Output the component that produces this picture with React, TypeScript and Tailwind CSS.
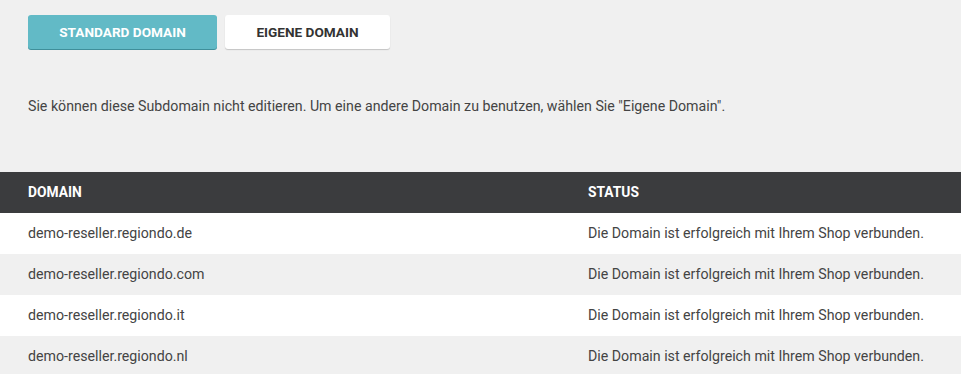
const DOMAINS = [
  'demo-reseller.regiondo.de',
  'demo-reseller.regiondo.com',
  'demo-reseller.regiondo.it',
  'demo-reseller.regiondo.nl',
]

export default function App() {
  return (
    <div className="min-h-screen bg-[#f0f0f0] font-['Roboto',sans-serif] text-[#444]">
      <div className="flex gap-2 px-7 pt-[15px]">
        <button className="h-[34px] w-[189px] rounded-[3px] bg-[#62bac6] text-[13.6px] font-bold text-white shadow-[0_1px_0_#3f8f9a]">
          STANDARD DOMAIN
        </button>
        <button className="h-[34px] w-[165px] rounded-[3px] bg-white text-[13.6px] font-bold text-[#333] shadow-[0_1px_1px_#c4c4c4]">
          EIGENE DOMAIN
        </button>
      </div>

      <p className="px-7 pt-[47px] text-[14.2px] leading-5 text-[#444]">
        Sie können diese Subdomain nicht editieren. Um eine andere Domain zu benutzen, wählen Sie "Eigene Domain".
      </p>

      <table className="mt-[56px] w-full border-collapse text-[14.2px]">
        <thead>
          <tr className="h-[41px] bg-[#3b3c3e] text-left text-white">
            <th className="w-[560px] px-7 text-[13.8px] font-bold">DOMAIN</th>
            <th className="px-7 text-[13.8px] font-bold">STATUS</th>
          </tr>
        </thead>
        <tbody>
          {DOMAINS.map((d, i) => (
            <tr key={d} className={`h-[41px] ${i % 2 === 0 ? 'bg-white' : 'bg-[#f0f0f0]'}`}>
              <td className="px-7">{d}</td>
              <td className="px-7">Die Domain ist erfolgreich mit Ihrem Shop verbunden.</td>
            </tr>
          ))}
        </tbody>
      </table>
    </div>
  )
}
